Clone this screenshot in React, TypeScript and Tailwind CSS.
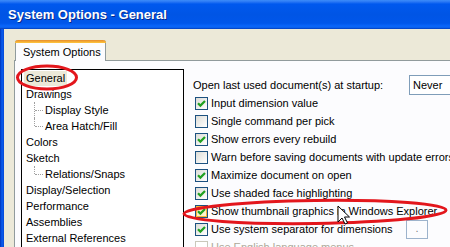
import React from 'react';

const tree = [
  { label: 'General', depth: 0, selected: true },
  { label: 'Drawings', depth: 0 },
  { label: 'Display Style', depth: 1 },
  { label: 'Area Hatch/Fill', depth: 1, last: true },
  { label: 'Colors', depth: 0 },
  { label: 'Sketch', depth: 0 },
  { label: 'Relations/Snaps', depth: 1, last: true },
  { label: 'Display/Selection', depth: 0 },
  { label: 'Performance', depth: 0 },
  { label: 'Assemblies', depth: 0 },
  { label: 'External References', depth: 0 },
];

const options = [
  { label: 'Input dimension value', checked: true },
  { label: 'Single command per pick', checked: false },
  { label: 'Show errors every rebuild', checked: true },
  { label: 'Warn before saving documents with update errors', checked: false },
  { label: 'Maximize document on open', checked: true },
  { label: 'Use shaded face highlighting', checked: true },
  { label: 'Show thumbnail graphics in Windows Explorer', checked: true, hover: true },
  { label: 'Use system separator for dimensions', checked: true, field: true },
  { label: 'Use English language menus', checked: false, disabled: true },
];

function Checkbox({ checked, hover, disabled }: { checked: boolean; hover?: boolean; disabled?: boolean }) {
  return (
    <div
      className={
        'w-[13px] h-[13px] shrink-0 border flex items-center justify-center ' +
        (disabled
          ? 'border-[#cac8bb] bg-white'
          : hover
          ? 'border-[#1c5180] bg-[linear-gradient(135deg,#fbe9b0,#fff6d8)] shadow-[inset_0_0_0_1px_#f8b636]'
          : 'border-[#1c5180] bg-[linear-gradient(135deg,#dcdcd7,#ffffff)]')
      }
    >
      {checked && (
        <svg width="11" height="11" viewBox="0 0 11 11">
          <path d="M2 5.2 L4.4 7.6 L9 3" fill="none" stroke="#21a121" strokeWidth="2.2" />
        </svg>
      )}
    </div>
  );
}

export default function App() {
  return (
    <div className="relative w-[450px] h-[247px] overflow-hidden flex flex-col font-['Liberation_Sans',Arial,sans-serif] text-[11px] text-black">
      {/* title bar */}
      <div className="h-[29px] shrink-0 flex items-center pl-[8px] bg-[linear-gradient(to_bottom,#3d8cf9_0%,#2a78f5_6%,#0058ee_14%,#0055e5_50%,#0056ea_80%,#0a66fb_90%,#0a5ee8_96%,#0036b6_100%)]">
        <span className="text-white font-bold text-[13px] [text-shadow:1px_1px_0_#0a2a8a]">System Options - General</span>
      </div>

      <div className="flex-1 flex min-h-0">
        <div className="w-[4px] shrink-0 bg-[linear-gradient(to_right,#0032b8,#0a5ef0_50%,#0848d4)]" />
        <div className="flex-1 flex flex-col bg-[#ece9d8] pl-[10px] pt-[11px] min-h-0">
          {/* tab */}
          <div className="flex shrink-0">
            <div className="relative z-10 -mb-px ml-px w-[91px] h-[21px] bg-[#fcfcfe] border-x border-[#919b9c] rounded-t-[3px] flex items-center pl-[7px] pt-[3px]">
              <div className="absolute left-[-1px] right-[-1px] top-0 h-[3px] rounded-t-[3px] bg-[linear-gradient(to_bottom,#e68b2c,#ffc73c)]" />
              System Options
            </div>
          </div>

          {/* page */}
          <div className="flex-1 flex bg-[#fcfcfe] border-l border-t border-[#919b9c] pl-[6px] pt-[8px] min-h-0">
            <div className="w-[163px] shrink-0 border border-black bg-white pl-[4px] h-[200px]">
              {tree.map((item) => (
                <div key={item.label} className="relative h-[16px] flex items-center">
                  {item.depth === 1 && (
                    <>
                      <div
                        className={
                          'absolute left-[8px] top-0 border-l border-dotted border-[#a0a0a0] ' +
                          (item.last ? 'h-[8px]' : 'h-[16px]')
                        }
                      />
                      <div className="absolute left-[9px] top-[8px] w-[8px] border-t border-dotted border-[#a0a0a0]" />
                    </>
                  )}
                  <span
                    className={
                      (item.depth === 1 ? 'ml-[19px] ' : '') +
                      (item.selected ? 'bg-[#ece9d8] px-[2px] -ml-[2px] h-[15px] flex items-center' : '')
                    }
                  >
                    {item.label}
                  </span>
                </div>
              ))}
            </div>

            <div className="flex-1 flex flex-col pl-[9px] pt-[7px] min-w-0">
              <div className="h-[18px] shrink-0 flex items-center whitespace-nowrap">
                <span className="w-[216px] shrink-0">Open last used document(s) at startup:</span>
                <div className="h-[20px] w-[60px] shrink-0 border border-[#7f9db9] bg-white flex items-center pl-[3px]">Never</div>
              </div>
              {options.map((o) => (
                <div key={o.label} className="h-[18px] shrink-0 flex items-center whitespace-nowrap pl-[2px]">
                  <Checkbox checked={o.checked} hover={o.hover} disabled={o.disabled} />
                  <span className={'ml-[3px] ' + (o.disabled ? 'text-[#aca899]' : '') + (o.field ? ' w-[195px] shrink-0' : '')}>
                    {o.label}
                  </span>
                  {o.field && (
                    <div className="w-[22px] h-[19px] shrink-0 border border-[#9db3cc] bg-[#fcfcfe] flex items-end justify-center pb-[4px] text-[#808080] leading-none">
                      .
                    </div>
                  )}
                </div>
              ))}
            </div>
          </div>
        </div>
      </div>

      {/* annotations and pointer */}
      <svg className="absolute inset-0 pointer-events-none" width="450" height="247">
        <ellipse cx="47" cy="77.5" rx="29.5" ry="11.5" fill="none" stroke="#e3161c" strokeWidth="3" />
        <ellipse cx="315" cy="212" rx="131" ry="11.5" fill="none" stroke="#e3161c" strokeWidth="3" transform="rotate(-0.8 315 212)" />
        <path d="M338 206 L338 222 L342 218 L345 224 L347.5 223 L344.5 217 L349.5 217 Z" fill="#fff" stroke="#000" strokeWidth="1" strokeLinejoin="miter" />
      </svg>
    </div>
  );
}
